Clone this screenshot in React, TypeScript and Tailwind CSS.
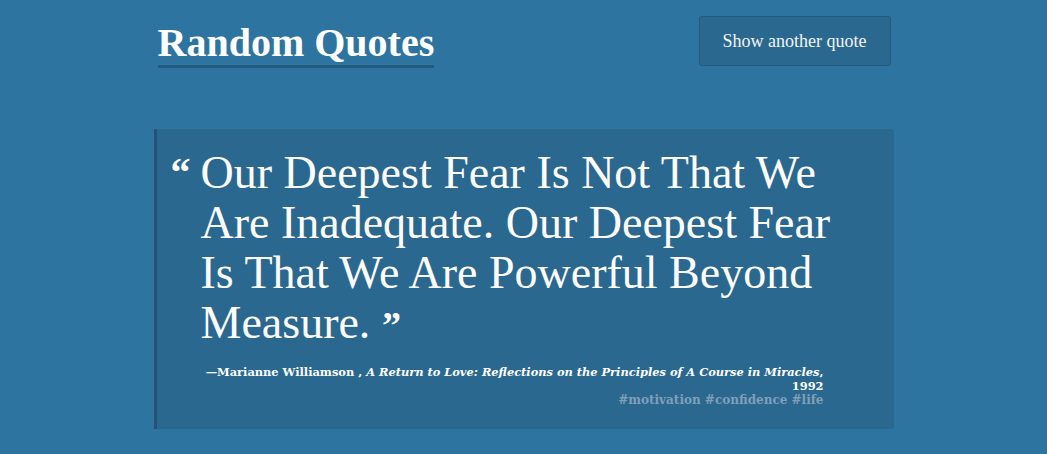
import React from 'react';

const quote = {
  text: 'Our Deepest Fear Is Not That We Are Inadequate. Our Deepest Fear Is That We Are Powerful Beyond Measure.',
  author: 'Marianne Williamson',
  source: 'A Return to Love: Reflections on the Principles of A Course in Miracles',
  year: '1992',
  tags: ['motivation', 'confidence', 'life'],
};

const App: React.FC = () => {
  return (
    <div className="min-h-screen w-full bg-[#2d74a1] text-white font-['Liberation_Serif',serif]">
      <div className="w-[740px] mx-auto pt-4">
        <header className="flex items-start justify-between">
          <h1 className="ml-1 mt-[6px] text-[40px] leading-[41px] font-bold border-b-[3px] border-[#245a7e] pb-[2px]">
            Random Quotes
          </h1>
          <button className="mr-[3px] w-[192px] h-[50px] bg-[#2a6890] border border-[#245a7e] rounded-[3px] text-[18px] text-[#f4f4f4]">
            Show another quote
          </button>
        </header>

        <section className="mt-[61px] h-[300px] bg-[#2a6890] border-l-[3px] border-[#235478] rounded-r-[3px] pt-[19px]">
          <div className="flex">
            <span className="w-[44px] shrink-0 pl-[14px] text-[40px] leading-[50px] font-bold">&ldquo;</span>
            <p className="w-[660px] shrink-0 text-[46px] leading-[50px] text-[#fdfdfd]">
              {quote.text} <span className="text-[38px] font-bold">&rdquo;</span>
            </p>
          </div>
          <div className="mt-[15px] pr-[70px] text-right font-['DejaVu_Serif',serif] text-[11.4px] leading-[14px] font-bold">
            <div className="whitespace-nowrap">
              &mdash;{quote.author} , <i>{quote.source}</i>,
            </div>
            <div>{quote.year}</div>
            <div className="text-[12px] text-[#809fb8]">
              {quote.tags.map(t => '#' + t).join(' ')}
            </div>
          </div>
        </section>
      </div>
    </div>
  );
};

export default App;
